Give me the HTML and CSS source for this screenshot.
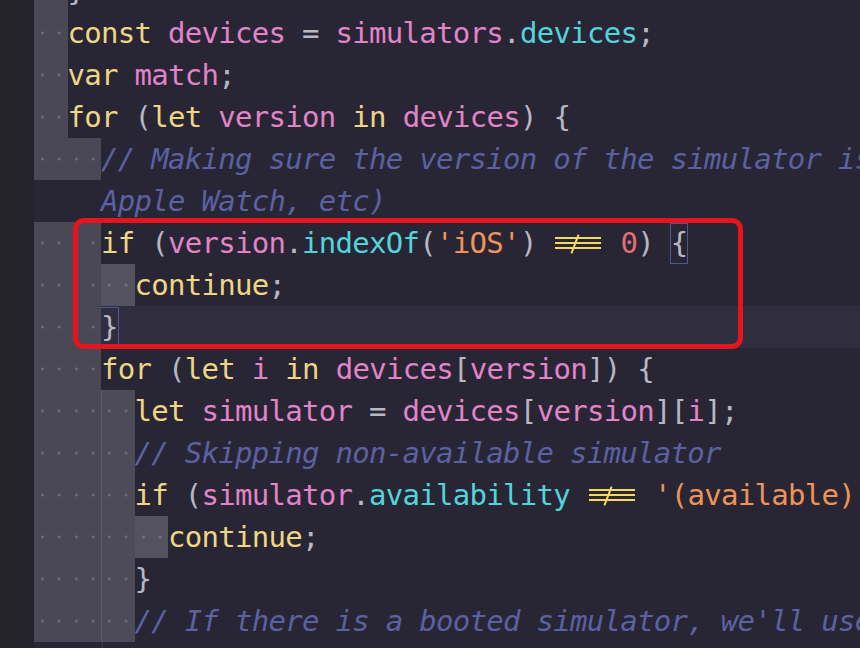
FILE: index.html
```html
<!DOCTYPE html>
<html>
<head>
<meta charset="utf-8">
<link rel="stylesheet" href="styles.css">
</head>
<body>
<div class="editor">
  <div class="gutter"></div>
  <div class="code">
    <div class="line"><span class="ind"></span><span class="txt"><span class="p">}</span></span></div>
    <div class="line"><span class="ind"></span><span class="txt"><span class="kw">const</span> <span class="id">devices</span> <span class="p">=</span> <span class="id">simulators</span><span class="p">.</span><span class="pr">devices</span><span class="p">;</span></span></div>
    <div class="line"><span class="ind"></span><span class="txt"><span class="kw">var</span> <span class="id">match</span><span class="p">;</span></span></div>
    <div class="line"><span class="ind"></span><span class="txt"><span class="kw">for</span> <span class="p">(</span><span class="kw">let</span> <span class="id">version</span> <span class="kw">in</span> <span class="id">devices</span><span class="p">)</span> <span class="p">{</span></span></div>
    <div class="line"><span class="ind"></span><span class="ind"></span><span class="txt cm">// Making sure the version of the simulator is an iOS one (not Apple TV,</span></div>
    <div class="line"><span class="txt cm pad2">Apple Watch, etc)</span></div>
    <div class="line"><span class="ind"></span><span class="ind"></span><span class="txt"><span class="kw">if</span> <span class="p">(</span><span class="id">version</span><span class="p">.</span><span class="pr">indexOf</span><span class="p">(</span><span class="st">'iOS'</span><span class="p">)</span> <span class="neq">!==</span> <span class="nu">0</span><span class="p">)</span> <span class="p mb">{</span></span></div>
    <div class="line"><span class="ind"></span><span class="ind"></span><span class="ind hi"></span><span class="txt"><span class="kw">continue</span><span class="p">;</span></span></div>
    <div class="line cur"><span class="ind"></span><span class="ind"></span><span class="txt"><span class="p mb">}</span></span></div>
    <div class="line"><span class="ind"></span><span class="ind"></span><span class="txt"><span class="kw">for</span> <span class="p">(</span><span class="kw">let</span> <span class="id">i</span> <span class="kw">in</span> <span class="id">devices</span><span class="p">[</span><span class="id">version</span><span class="p">])</span> <span class="p">{</span></span></div>
    <div class="line"><span class="ind"></span><span class="ind"></span><span class="ind l3"></span><span class="txt"><span class="kw">let</span> <span class="id">simulator</span> <span class="p">=</span> <span class="id">devices</span><span class="p">[</span><span class="id">version</span><span class="p">][</span><span class="id">i</span><span class="p">];</span></span></div>
    <div class="line"><span class="ind"></span><span class="ind"></span><span class="ind l3"></span><span class="txt cm">// Skipping non-available simulator</span></div>
    <div class="line"><span class="ind"></span><span class="ind"></span><span class="ind l3"></span><span class="txt"><span class="kw">if</span> <span class="p">(</span><span class="id">simulator</span><span class="p">.</span><span class="pr">availability</span> <span class="neq">!==</span> <span class="st">'(available)'</span><span class="p">)</span> <span class="p">{</span></span></div>
    <div class="line"><span class="ind"></span><span class="ind"></span><span class="ind l3"></span><span class="ind hi"></span><span class="txt"><span class="kw">continue</span><span class="p">;</span></span></div>
    <div class="line"><span class="ind"></span><span class="ind"></span><span class="ind l3"></span><span class="txt"><span class="p">}</span></span></div>
    <div class="line"><span class="ind"></span><span class="ind"></span><span class="ind l3"></span><span class="txt cm">// If there is a booted simulator, we'll use it</span></div>
    <div class="line"><span class="guide"></span><span class="txt"></span></div>
  </div>
</div>
<div class="annot"></div>
</body>
</html>
```

FILE: styles.css
```css
html, body {
  margin: 0;
  padding: 0;
}

body {
  background: #282634;
  overflow: hidden;
  position: relative;
  height: 648px;
}

.editor {
  display: flex;
  height: 648px;
}

.gutter {
  flex: none;
  width: 34px;
  background: #24232c;
}

.code {
  flex: 1;
  min-width: 0;
  margin-top: -30px;
  font-family: "DejaVu Sans Mono", monospace;
  font-size: 29px;
  letter-spacing: -0.709px;
}

.line {
  display: flex;
  height: 42px;
  white-space: pre;
}

.ind {
  flex: none;
  width: 33.5px;
  height: 42px;
  background:
    radial-gradient(circle, #6b6975 0 1.2px, transparent 1.9px) 0 0 / 16.75px 42px repeat-x,
    #4a4854;
}

.ind.l3 {
  background:
    radial-gradient(circle, #6b6975 0 1.2px, transparent 1.9px) 0 0 / 16.75px 42px repeat-x,
    #4d4b58;
  box-shadow: inset 1px 0 0 #5d5b69;
}

.ind.hi {
  background:
    radial-gradient(circle, #717f7b 0 0, transparent 0),
    radial-gradient(circle, #73717c 0 1.2px, transparent 1.9px) 0 0 / 16.75px 42px repeat-x,
    #54525e;
}

.guide {
  flex: none;
  width: 67.5px;
  border-right: 1px solid #3a3846;
  height: 42px;
}

.txt {
  flex: 1;
  min-width: 0;
  overflow: hidden;
  line-height: 42px;
  color: #b9b7c4;
}

.pad2 {
  padding-left: 67px;
}

.cur .txt {
  background: #2f2d3e;
}

.kw { color: #efd685; }
.id { color: #e184c8; }
.pr { color: #53d4dc; }
.p  { color: #b9b7c4; }
.st { color: #ee9458; }
.nu { color: #e66e73; }
.cm { color: #5b61a3; font-style: italic; }

.mb {
  padding: 2px 0 3px;
  box-shadow: 0 0 0 1px #4d5892;
}

.neq {
  display: inline-block;
  vertical-align: top;
  position: relative;
  width: 50.25px;
  height: 42px;
  color: transparent;
}

.neq::before {
  content: "";
  position: absolute;
  left: 2px;
  width: 46px;
  top: 15px;
  height: 12px;
  background: linear-gradient(to bottom,
    #f2da62 0 2px, transparent 2px 5px,
    #f2da62 5px 7px, transparent 7px 10px,
    #f2da62 10px 12px);
}

.neq::after {
  content: "";
  position: absolute;
  left: 20.5px;
  top: 12px;
  width: 2px;
  height: 20px;
  background: #f2da62;
  transform: rotate(21deg);
}

.annot {
  position: absolute;
  left: 73px;
  top: 218px;
  width: 670px;
  height: 131px;
  box-sizing: border-box;
  border: 5px solid #e6151d;
  border-radius: 11px;
  pointer-events: none;
}
```
